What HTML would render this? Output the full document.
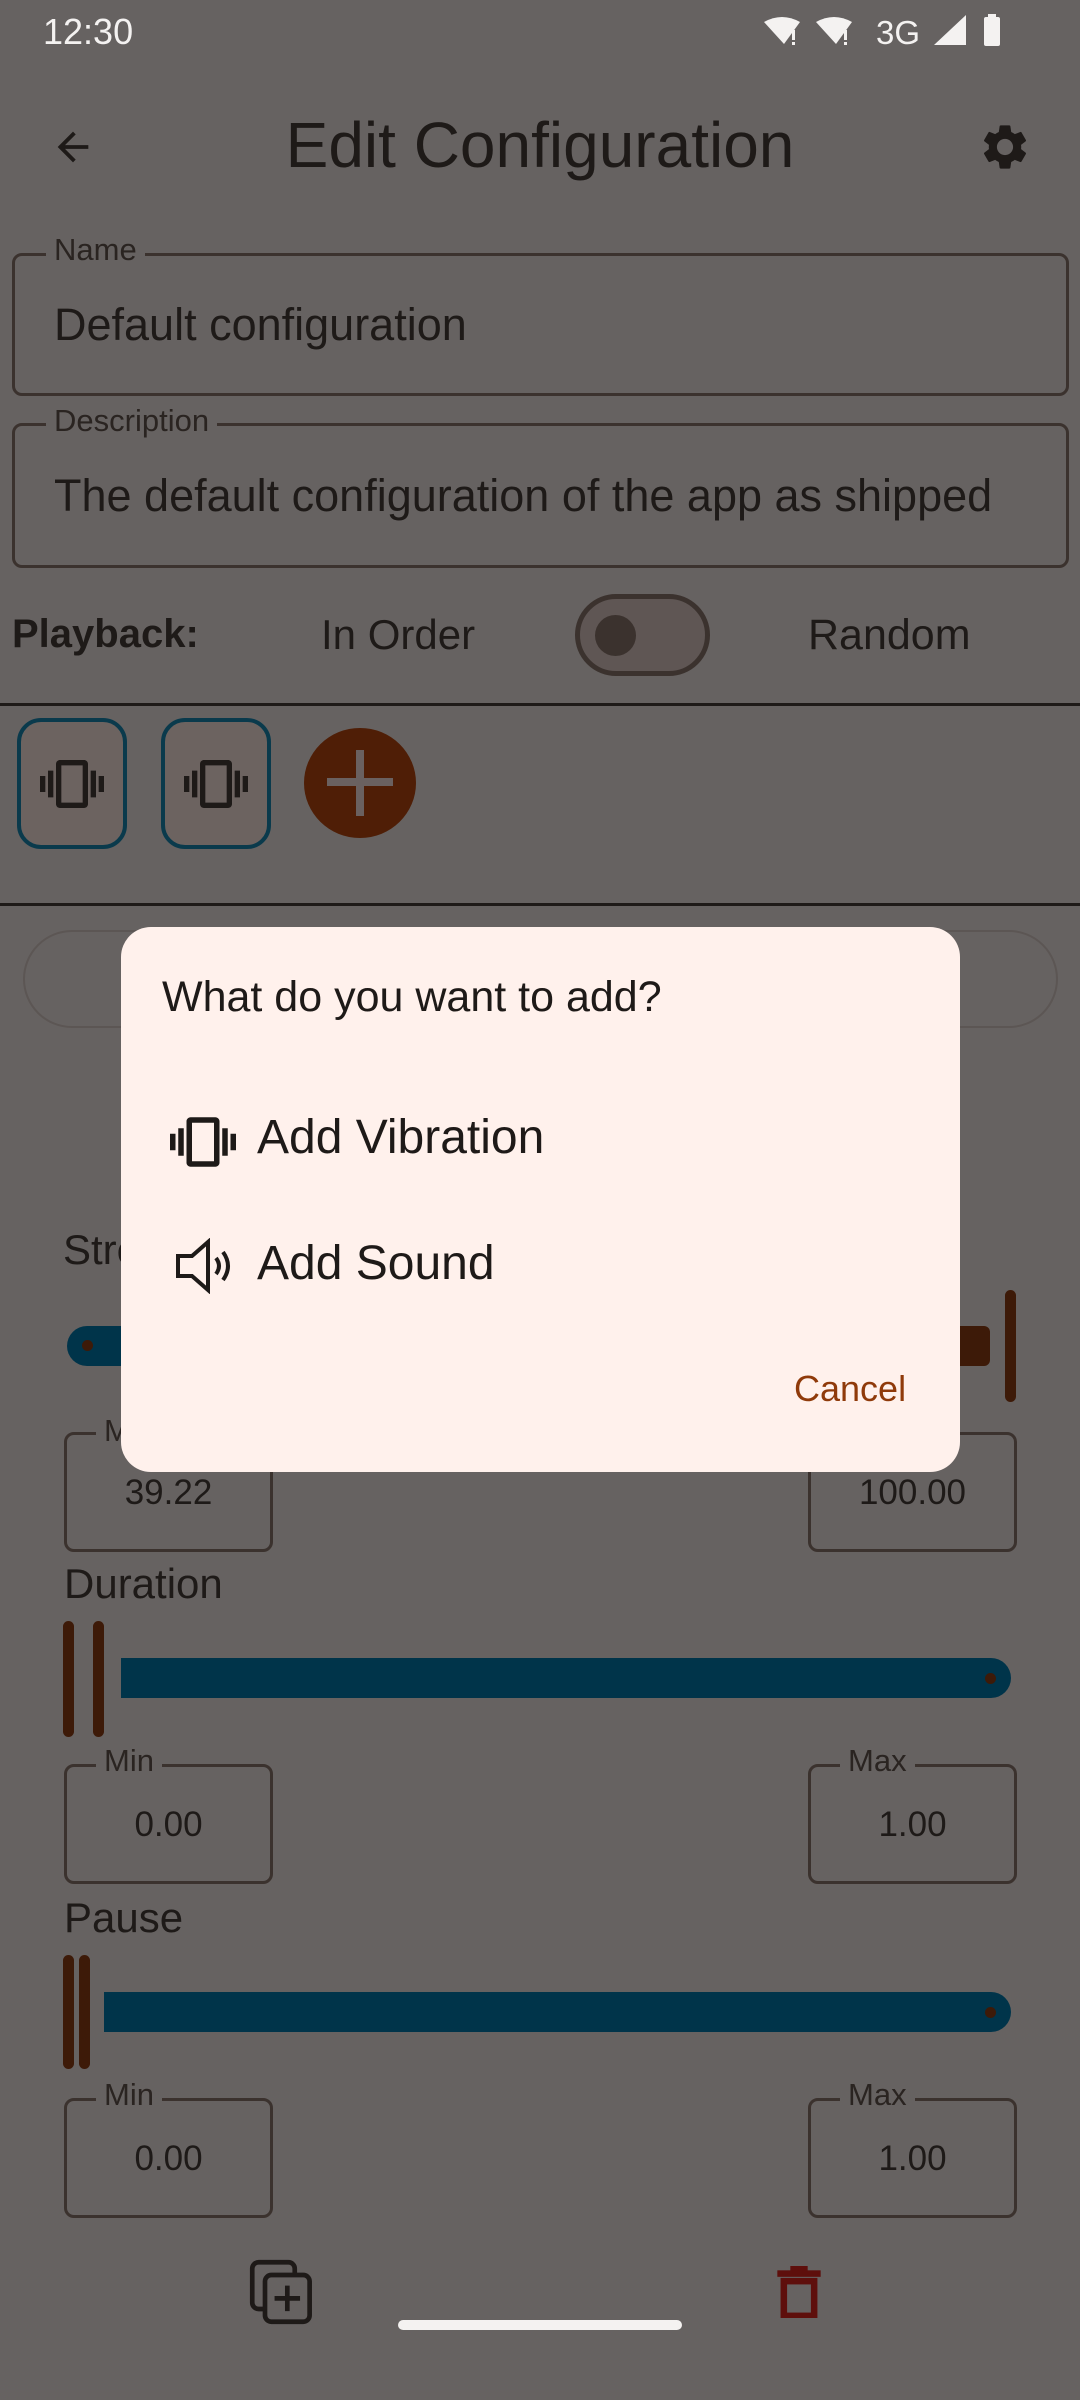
<!DOCTYPE html>
<html><head><meta charset="utf-8"><style>
*{margin:0;padding:0;box-sizing:border-box}
body{width:1080px;height:2400px;background:#666261;position:relative;overflow:hidden;font-family:"Liberation Sans",sans-serif;color:#1e1a18}
.a{position:absolute}
.box{position:absolute;border:3px solid #3b322e;border-radius:10px}
.lbl{position:absolute;background:#666261;padding:0 8px;font-size:31px;color:#2a2421;line-height:30px}
.val{position:absolute;font-size:35px;color:#1e1a18;width:100%;text-align:center}
.bar{position:absolute;width:11px;background:#3d1a08;border-radius:6px}
.track{position:absolute;background:#00344a;border-radius:0 30px 30px 0}
.dot{position:absolute;width:11px;height:11px;border-radius:50%;background:#3d1a08}
</style></head><body>
<!-- status bar -->
<div class="a" style="left:43px;top:11px;font-size:36px;color:#f4f2f1">12:30</div>
<svg class="a" style="left:762px;top:14px" width="260" height="34" viewBox="0 0 260 34">
<path d="M2 8 Q20 -2 38 8 L22 30 Z" fill="#f4f2f1"/><rect x="30" y="16" width="3" height="10" fill="#f4f2f1"/><rect x="30" y="28" width="3" height="3" fill="#f4f2f1"/>
<path d="M54 8 Q72 -2 90 8 L74 30 Z" fill="#f4f2f1"/><rect x="82" y="16" width="3" height="10" fill="#f4f2f1"/><rect x="82" y="28" width="3" height="3" fill="#f4f2f1"/>
<text x="114" y="30" font-size="33" fill="#f4f2f1" font-family="Liberation Sans">3G</text>
<path d="M172 31 L204 31 L204 1 Z" fill="#f4f2f1"/>
<rect x="222" y="3" width="16" height="29" rx="2" fill="#f4f2f1"/><rect x="226" y="0" width="8" height="4" fill="#f4f2f1"/>
</svg>
<!-- app bar -->
<svg class="a" style="left:50px;top:124px" width="46" height="46" viewBox="0 0 24 24"><path d="M20 11H7.830l5.59-5.59L12 4l-8 8 8 8 1.41-1.41L7.83 13H20v-2z" fill="#1e1a18"/></svg>
<div class="a" style="left:0;width:1080px;top:108px;text-align:center;font-size:64px;color:#1e1a18">Edit Configuration</div>
<svg class="a" style="left:978px;top:120px" width="54" height="54" viewBox="0 0 24 24"><path fill="#1e1a18" d="M19.14 12.940c.04-.3.06-.61.06-.94 0-.32-.02-.64-.07-.94l2.03-1.58a.49.49 0 0 0 .12-.61l-1.92-3.32a.488.488 0 0 0-.59-.22l-2.39.96c-.5-.38-1.03-.7-1.620-.94l-.36-2.54a.484.484 0 0 0-.48-.41h-3.84c-.24 0-.43.17-.47.41l-.36 2.54c-.59.24-1.13.57-1.62.94l-2.39-.96c-.22-.08-.47 0-.59.22L2.74 8.87c-.12.21-.08.47.12.61l2.03 1.58c-.05.3-.09.63-.09.94s.02.64.07.94l-2.03 1.58a.49.49 0 0 0-.12.61l1.92 3.32c.12.22.37.29.59.22l2.39-.96c.5.38 1.03.7 1.62.94l.36 2.54c.05.24.24.41.48.41h3.84c.24 0 .44-.17.47-.41l.36-2.54c.59-.24 1.13-.56 1.62-.94l2.39.96c.22.08.47 0 .59-.22l1.92-3.32c.12-.22.07-.47-.12-.61l-2.01-1.58zM12 15.6c-1.98 0-3.6-1.62-3.6-3.6s1.62-3.6 3.6-3.6 3.6 1.62 3.6 3.6-1.62 3.6-3.6 3.6z"/></svg>
<!-- name -->
<div class="box" style="left:12px;top:253px;width:1057px;height:143px"></div>
<div class="lbl" style="left:46px;top:235px">Name</div>
<div class="a" style="left:54px;top:299px;font-size:45px">Default configuration</div>
<div class="box" style="left:12px;top:423px;width:1057px;height:145px"></div>
<div class="lbl" style="left:46px;top:406px">Description</div>
<div class="a" style="left:54px;top:470px;font-size:45px">The default configuration of the app as shipped</div>
<!-- playback -->
<div class="a" style="left:12px;top:612px;font-size:40px;font-weight:bold">Playback:</div>
<div class="a" style="left:321px;top:611px;font-size:42px">In Order</div>
<div class="a" style="left:575px;top:594px;width:135px;height:82px;border:5px solid #3b322e;border-radius:41px;background:#5f5654"></div>
<div class="a" style="left:595px;top:615px;width:41px;height:41px;border-radius:50%;background:#3b322e"></div>
<div class="a" style="left:808px;top:611px;font-size:43px">Random</div>
<div class="a" style="left:0;top:703px;width:1080px;height:3px;background:#1e1a18"></div>
<!-- buttons -->
<div class="a" style="left:17px;top:718px;width:110px;height:131px;border:4px solid #0a3a4c;border-radius:24px;background:#6c6360"></div>
<div class="a" style="left:161px;top:718px;width:110px;height:131px;border:4px solid #0a3a4c;border-radius:24px;background:#6c6360"></div>
<svg class="a" style="left:40px;top:752px" width="64" height="64" viewBox="0 0 24 24"><path fill="#1e1a18" d="M0 15h2V9H0v6zm3 2h2V7H3v10zm19-8v6h2V9h-2zm-3 8h2V7h-2v10zM16.5 3h-9C6.67 3 6 3.67 6 4.5v15c0 .83.67 1.5 1.5 1.5h9c.83 0 1.5-.67 1.5-1.5v-15c0-.83-.67-1.5-1.5-1.5zM16 19H8V5h8v14z"/></svg>
<svg class="a" style="left:184px;top:752px" width="64" height="64" viewBox="0 0 24 24"><path fill="#1e1a18" d="M0 15h2V9H0v6zm3 2h2V7H3v10zm19-8v6h2V9h-2zm-3 8h2V7h-2v10zM16.5 3h-9C6.67 3 6 3.67 6 4.5v15c0 .83.67 1.5 1.5 1.5h9c.83 0 1.5-.67 1.5-1.5v-15c0-.83-.67-1.5-1.5-1.5zM16 19H8V5h8v14z"/></svg>
<div class="a" style="left:304px;top:728px;width:112px;height:110px;border-radius:50%;background:#4f1e06"></div>
<div class="a" style="left:327px;top:778px;width:66px;height:8px;background:#6a6160"></div>
<div class="a" style="left:356px;top:750px;width:8px;height:66px;background:#6a6160"></div>
<div class="a" style="left:0;top:903px;width:1080px;height:3px;background:#1e1a18"></div>
<!-- pill behind -->
<div class="a" style="left:23px;top:930px;width:1035px;height:98px;border:2px solid #5c5654;border-radius:49px"></div>
<!-- strength -->
<div class="a" style="left:63px;top:1226px;font-size:42px">Strength</div>
<div class="a" style="left:67px;top:1326px;width:760px;height:40px;background:#00344a;border-radius:20px 0 0 20px"></div>
<div class="a" style="left:827px;top:1326px;width:163px;height:40px;background:#3d1a08;border-radius:0 6px 6px 0"></div>
<div class="dot" style="left:82px;top:1340px"></div>
<div class="bar" style="left:1005px;top:1290px;height:112px"></div>
<div class="box" style="left:64px;top:1432px;width:209px;height:120px"><div class="val" style="top:38px">39.22</div></div>
<div class="lbl" style="left:96px;top:1416px">Min</div>
<div class="box" style="left:808px;top:1432px;width:209px;height:120px"><div class="val" style="top:38px">100.00</div></div>
<div class="lbl" style="left:840px;top:1416px">Max</div>
<!-- duration -->
<div class="a" style="left:64px;top:1560px;font-size:42px">Duration</div>
<div class="bar" style="left:63px;top:1621px;height:116px"></div>
<div class="bar" style="left:93px;top:1621px;height:116px"></div>
<div class="track" style="left:121px;top:1658px;width:890px;height:40px"></div>
<div class="dot" style="left:985px;top:1673px"></div>
<div class="box" style="left:64px;top:1764px;width:209px;height:120px"><div class="val" style="top:38px">0.00</div></div>
<div class="lbl" style="left:96px;top:1746px">Min</div>
<div class="box" style="left:808px;top:1764px;width:209px;height:120px"><div class="val" style="top:38px">1.00</div></div>
<div class="lbl" style="left:840px;top:1746px">Max</div>
<!-- pause -->
<div class="a" style="left:64px;top:1894px;font-size:42px">Pause</div>
<div class="bar" style="left:63px;top:1955px;height:114px"></div>
<div class="bar" style="left:79px;top:1955px;height:114px"></div>
<div class="track" style="left:104px;top:1992px;width:907px;height:40px"></div>
<div class="dot" style="left:985px;top:2007px"></div>
<div class="box" style="left:64px;top:2098px;width:209px;height:120px"><div class="val" style="top:38px">0.00</div></div>
<div class="lbl" style="left:96px;top:2080px">Min</div>
<div class="box" style="left:808px;top:2098px;width:209px;height:120px"><div class="val" style="top:38px">1.00</div></div>
<div class="lbl" style="left:840px;top:2080px">Max</div>
<!-- bottom icons -->
<svg class="a" style="left:248px;top:2258px" width="68" height="68" viewBox="0 0 32 32"><rect x="2" y="2" width="20" height="22" rx="3" fill="none" stroke="#1e1a18" stroke-width="2.2"/><rect x="8" y="8" width="21" height="22" rx="3" fill="#666261" stroke="#1e1a18" stroke-width="2.2"/><path d="M18.5 13v12M12.5 19h12" stroke="#1e1a18" stroke-width="2.2"/></svg>
<svg class="a" style="left:776px;top:2266px" width="46" height="52" viewBox="0 0 20 24"><rect x="0" y="2" width="20" height="3" fill="#5e0f0c"/><rect x="6" y="0" width="8" height="3" fill="#5e0f0c"/><rect x="3" y="7" width="14" height="16" fill="none" stroke="#5e0f0c" stroke-width="3"/></svg>
<div class="a" style="left:398px;top:2320px;width:284px;height:10px;border-radius:5px;background:#f4f2f1"></div>
<!-- dialog -->
<div class="a" style="left:121px;top:927px;width:839px;height:545px;background:#fff1ec;border-radius:30px"></div>
<div class="a" style="left:162px;top:973px;font-size:43px;color:#1e1a18">What do you want to add?</div>
<svg class="a" style="left:170px;top:1109px" width="66" height="66" viewBox="0 0 24 24"><path fill="#1e1a18" d="M0 15h2V9H0v6zm3 2h2V7H3v10zm19-8v6h2V9h-2zm-3 8h2V7h-2v10zM16.5 3h-9C6.67 3 6 3.670 6 4.5v15c0 .83.67 1.5 1.5 1.5h9c.83 0 1.5-.67 1.5-1.5v-15c0-.83-.67-1.5-1.5-1.5zM16 19H8V5h8v14z"/></svg>
<div class="a" style="left:257px;top:1110px;font-size:48px;color:#1e1a18">Add Vibration</div>
<svg class="a" style="left:174px;top:1238px" width="60" height="56" viewBox="0 0 30 28"><path d="M2 9h7l8-7v24l-8-7H2z" fill="none" stroke="#1e1a18" stroke-width="2"/><path d="M21 10q3 4 0 8M24.5 7q5 7 0 14" fill="none" stroke="#1e1a18" stroke-width="2"/></svg>
<div class="a" style="left:257px;top:1236px;font-size:48px;color:#1e1a18">Add Sound</div>
<div class="a" style="left:794px;top:1368px;font-size:36px;color:#8f3a0a">Cancel</div>
</body></html>
